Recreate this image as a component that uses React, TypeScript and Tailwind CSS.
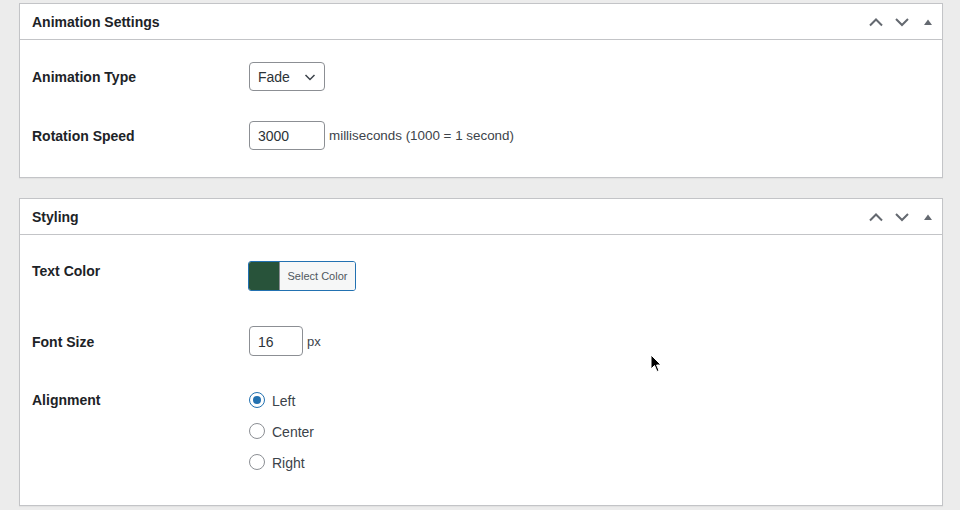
import React from "react";

const font = { fontFamily: '"Liberation Sans", Arial, sans-serif' };

function HeaderIcons() {
  return (
    <div className="flex items-center">
      <svg width="16" height="16" viewBox="0 0 16 16" className="mr-[10px]">
        <path d="M2 11.5 L8 5.5 L14 11.5" fill="none" stroke="#646970" strokeWidth="2" />
      </svg>
      <svg width="16" height="16" viewBox="0 0 16 16" className="mr-[13px]">
        <path d="M2 5 L8 11 L14 5" fill="none" stroke="#646970" strokeWidth="2" />
      </svg>
      <svg width="10" height="10" viewBox="0 0 10 10" className="mr-[9px]">
        <path d="M1 8 L5 2.5 L9 8 Z" fill="#646970" />
      </svg>
    </div>
  );
}

function Panel({ title, children }: { title: string; children: React.ReactNode }) {
  return (
    <div className="border border-[#c3c4c7] bg-white shadow-[0_1px_1px_rgba(0,0,0,0.04)]">
      <div className="flex h-[36px] items-center justify-between border-b border-[#c3c4c7] pl-[12px]">
        <h2 className="pt-[2px] text-[14px] font-bold text-[#1d2327]">{title}</h2>
        <HeaderIcons />
      </div>
      {children}
    </div>
  );
}

function Radio({ label, checked }: { label: string; checked?: boolean }) {
  return (
    <div className="flex h-[20px] items-center">
      <span
        className={`flex h-[16px] w-[16px] items-center justify-center rounded-full border ${
          checked ? "border-[#2271b1]" : "border-[#8c8f94]"
        } bg-white`}
      >
        {checked && <span className="h-[8px] w-[8px] rounded-full bg-[#2271b1]" />}
      </span>
      <span className="ml-[7px] pt-[2px] text-[14px] text-[#3c434a]">{label}</span>
    </div>
  );
}

export default function App() {
  return (
    <div style={font} className="relative h-[510px] w-[960px] overflow-hidden bg-[#ececec] pl-[19px] pr-[17px] pt-[3px]">
      <Panel title="Animation Settings">
        <div className="pb-[27px] pl-[12px] pt-[22px]">
          <div className="flex items-center">
            <div className="w-[217px] pt-[2px] text-[14px] font-bold text-[#1d2327]">Animation Type</div>
            <div className="flex h-[29px] w-[76px] items-center justify-between rounded-[4px] border border-[#8c8f94] pl-[8px] pr-[8px] text-[14px] text-[#2c3338]">
              <span className="pt-[2px]">Fade</span>
              <svg width="12" height="12" viewBox="0 0 12 12">
                <path d="M1.5 4 L6 8.5 L10.5 4" fill="none" stroke="#3c434a" strokeWidth="1.5" />
              </svg>
            </div>
          </div>
          <div className="mt-[30px] flex items-center">
            <div className="w-[217px] pt-[2px] text-[14px] font-bold text-[#1d2327]">Rotation Speed</div>
            <div className="flex h-[29px] w-[76px] items-center rounded-[4px] border border-[#8c8f94] pl-[8px] pt-[2px] text-[14px] text-[#2c3338]">
              3000
            </div>
            <span className="ml-[4px] pt-[2px] text-[13.4px] text-[#3c434a]">milliseconds (1000 = 1 second)</span>
          </div>
        </div>
      </Panel>

      <div className="mt-[20px]">
        <Panel title="Styling">
          <div className="pb-[33px] pl-[12px] pt-[25px]">
            <div className="flex items-start">
              <div className="w-[216px] pt-[1px] text-[14px] font-bold leading-[20px] text-[#1d2327]">Text Color</div>
              <div className="mt-px flex h-[30px] w-[108px] overflow-hidden rounded-[3px] border border-[#2271b1]">
                <div className="w-[30px] bg-[#28533a]" />
                <div className="flex flex-1 items-center justify-center border-l border-[#8c8f94] bg-[#f6f7f7] pt-px text-[11px] text-[#50575e]">
                  Select Color
                </div>
              </div>
            </div>
            <div className="mt-[35px] flex items-center">
              <div className="w-[217px] pt-[2px] text-[14px] font-bold text-[#1d2327]">Font Size</div>
              <div className="flex h-[30px] w-[54px] items-center rounded-[4px] border border-[#8c8f94] pl-[8px] pt-[2px] text-[14px] text-[#2c3338]">
                16
              </div>
              <span className="ml-[4px] pt-[2px] text-[13px] text-[#3c434a]">px</span>
            </div>
            <div className="mt-[33px] flex items-start">
              <div className="w-[217px] pt-[1px] text-[14px] font-bold leading-[20px] text-[#1d2327]">Alignment</div>
              <div className="mt-[1px] flex flex-col gap-[11px]">
                <Radio label="Left" checked />
                <Radio label="Center" />
                <Radio label="Right" />
              </div>
            </div>
          </div>
        </Panel>
      </div>

      <svg className="absolute left-[650px] top-[354px]" width="14" height="20" viewBox="0 0 14 20">
        <path d="M1 1 L1 15 L4.5 11.5 L7 17.5 L9 16.6 L6.6 11 L11 11 Z" fill="#000" stroke="#fff" strokeWidth="1" />
      </svg>
    </div>
  );
}
